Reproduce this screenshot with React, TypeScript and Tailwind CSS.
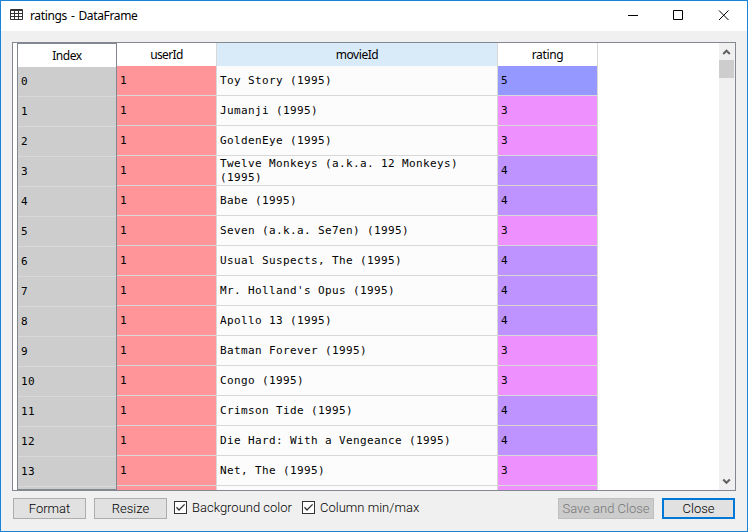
import React from "react";

const rows: { movie: string; rating: 3 | 4 | 5 }[] = [
  { movie: "Toy Story (1995)", rating: 5 },
  { movie: "Jumanji (1995)", rating: 3 },
  { movie: "GoldenEye (1995)", rating: 3 },
  { movie: "Twelve Monkeys (a.k.a. 12 Monkeys) (1995)", rating: 4 },
  { movie: "Babe (1995)", rating: 4 },
  { movie: "Seven (a.k.a. Se7en) (1995)", rating: 3 },
  { movie: "Usual Suspects, The (1995)", rating: 4 },
  { movie: "Mr. Holland's Opus (1995)", rating: 4 },
  { movie: "Apollo 13 (1995)", rating: 4 },
  { movie: "Batman Forever (1995)", rating: 3 },
  { movie: "Congo (1995)", rating: 3 },
  { movie: "Crimson Tide (1995)", rating: 4 },
  { movie: "Die Hard: With a Vengeance (1995)", rating: 4 },
  { movie: "Net, The (1995)", rating: 3 },
];

const ratingColor = { 3: "bg-[#ee91ff]", 4: "bg-[#be93ff]", 5: "bg-[#9498ff]" };

const cell = "flex h-[30px] shrink-0 items-center border-b border-[#d8d8d8] pl-[3px]";
const header =
  "flex h-[23px] shrink-0 items-center justify-center font-['Noto_Sans',sans-serif] text-[12px] leading-none";

function Column({ title, className, headerClass = "", children }: {
  title: string;
  className: string;
  headerClass?: string;
  children: React.ReactNode;
}) {
  return (
    <div className={`flex shrink-0 flex-col overflow-hidden border-r border-[#d8d8d8] ${className}`}>
      <div className={`${header} ${headerClass}`}>{title}</div>
      {children}
    </div>
  );
}

function Button({ label, className }: { label: string; className: string }) {
  return (
    <button className={`flex h-[21px] shrink-0 items-center justify-center whitespace-nowrap leading-none ${className}`}>
      {label}
    </button>
  );
}

function Check({ label, className }: { label: string; className: string }) {
  return (
    <label className={`flex h-[19px] shrink-0 items-center gap-[5px] whitespace-nowrap leading-none ${className}`}>
      <svg width="13" height="13" viewBox="0 0 13 13" fill="none">
        <rect x=".5" y=".5" width="12" height="12" fill="#fff" stroke="#333" />
        <path d="M2.5 6.3 5 9 10.6 3.4" stroke="#333" strokeWidth="1.3" />
      </svg>
      <span>{label}</span>
    </label>
  );
}

export default function App() {
  return (
    <div className="flex h-[532px] w-[748px] flex-col overflow-hidden border border-[#1883d7] bg-[#f0f0f0] text-black">
      <div className="flex h-[30px] shrink-0 items-center bg-white font-['Noto_Sans',sans-serif] text-[12px]">
        <svg className="mb-[3px] ml-[9px]" width="13" height="11" viewBox="0 0 13 11">
          <rect width="13" height="11" rx="1" fill="#333" />
          <path
            fill="#fff"
            d="M1 2h3v2H1zM5 2h3v2H5zM9 2h3v2H9zM1 5h3v2H1zM5 5h3v2H5zM9 5h3v2H9zM1 8h3v2H1zM5 8h3v2H5zM9 8h3v2H9z"
          />
        </svg>
        <span className="ml-[7px] tracking-[-0.35px] [word-spacing:1.2px]">ratings - DataFrame</span>
        <svg className="mb-px ml-auto mr-[17px]" width="102" height="11" viewBox="0 0 102 11" fill="none" stroke="#000">
          <path d="M0 5.5h10M45.5.5h9v9h-9z" />
          <path d="M91 .5 100.500 10M100.500.5 91 10" />
        </svg>
      </div>

      <div className="ml-[11px] mt-[11px] flex h-[449px] w-[724px] shrink-0 overflow-hidden border border-[#828790] bg-white pl-1 font-['DejaVu_Sans_Mono',monospace] text-[11px] leading-[14px] tracking-[0.378px]">
        <div className="flex h-[447px] w-[100px] shrink-0 flex-col overflow-hidden border border-[#828790] bg-[#cdcdcd]">
          <div className={`${header} bg-white tracking-[-0.45px]`}>Index</div>
          {rows.map((_, i) => (
            <div key={i} className={cell}>{i}</div>
          ))}
        </div>
        <Column title="userId" className="w-[100px]" headerClass="tracking-[-0.6px]">
          {rows.map((_, i) => (
            <div key={i} className={`${cell} bg-[#ff9499]`}>1</div>
          ))}
          <div className="h-1 bg-[#ff9499]" />
        </Column>
        <Column title="movieId" className="w-[281px]" headerClass="bg-[#d9ebf9] tracking-[-0.45px]">
          {rows.map((r, i) => (
            <div key={i} className={`${cell} bg-[#fcfcfc]`}>
              <span className="w-[250px]">{r.movie}</span>
            </div>
          ))}
          <div className="h-1 bg-[#fcfcfc]" />
        </Column>
        <Column title="rating" className="w-[100px]" headerClass="tracking-[-0.35px]">
          {rows.map((r, i) => (
            <div key={i} className={`${cell} ${ratingColor[r.rating]}`}>{r.rating}</div>
          ))}
          <div className="h-1 bg-[#ee91ff]" />
        </Column>
        <div className="ml-auto flex w-4 flex-col bg-[#f0f0f0]">
          <svg width="15" height="17" viewBox="0 0 15 17" fill="none" stroke="#606060" strokeWidth="2">
            <path d="M4.200 11 7.500 7.700 10.800 11" />
          </svg>
          <div className="h-[18px] w-[15px] bg-[#cdcdcd]" />
          <svg className="mt-auto" width="15" height="17" viewBox="0 0 15 17" fill="none" stroke="#606060" strokeWidth="2">
            <path d="M4.200 6.500 7.500 9.800 10.800 6.500" />
          </svg>
        </div>
      </div>

      <div className="ml-3 mt-[7px] flex w-[722px] font-[Roboto,sans-serif] text-[13px] font-light">
        <Button label="Format" className="w-[73px] border border-[#adadad] bg-[#e1e1e1]" />
        <Button label="Resize" className="ml-2 w-[73px] border border-[#adadad] bg-[#e1e1e1]" />
        <Check label="Background color" className="ml-[7px] w-[128px]" />
        <Check label="Column min/max" className="w-[130px]" />
        <Button label="Save and Close" className="ml-auto w-[96px] border border-[#bfbfbf] bg-[#cccccc] text-[#777777]" />
        <Button label="Close" className="ml-2 w-[73px] border-2 border-[#0078d7] bg-[#e1e1e1]" />
      </div>
    </div>
  );
}
